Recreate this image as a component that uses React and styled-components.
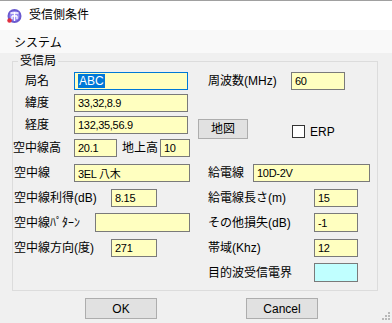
import styled, { createGlobalStyle } from "styled-components";

const GlobalStyle = createGlobalStyle`
  html, body {
    margin: 0;
    padding: 0;
    background: #f0f0f0;
  }
  body {
    font-family: "Liberation Sans", "Noto Sans CJK JP", sans-serif;
    font-size: 12px;
    color: #000;
  }
`;

const Window = styled.div`
  position: relative;
  width: 392px;
  height: 323px;
  overflow: hidden;
  background: #f0f0f0;
  display: flex;
  flex-direction: column;
`;

const TitleBar = styled.div`
  height: 29px;
  border-top: 1px solid #a0a0a0;
  background: #fff;
  display: flex;
  align-items: center;
  padding-left: 6px;
  gap: 7px;
`;

const Title = styled.span`
  font-size: 12px;
  line-height: 14px;
  margin-top: -1px;
`;

const MenuBar = styled.div`
  height: 23px;
  background: #f9f9f9;
  display: flex;
  align-items: center;
  padding-left: 14px;
  padding-top: 2px;
  box-sizing: border-box;
`;

const MenuItem = styled.span`
  line-height: 14px;
`;

const GroupBox = styled.fieldset`
  margin: 1px 0 0 12px;
  padding: 4px 0 0 0;
  width: 366px;
  height: 237px;
  box-sizing: border-box;
  border: 1px solid #dcdcdc;
  display: flex;
`;

const Legend = styled.legend`
  margin-left: 5px;
  padding: 0 2px;
  line-height: 14px;
`;

const Column = styled.div`
  width: ${(p) => p.$w}px;
  display: flex;
  flex-direction: column;
`;

const Row = styled.div`
  display: flex;
  align-items: center;
  height: ${(p) => p.$h || 18}px;
  margin-top: ${(p) => p.$mt || 0}px;
`;

const Label = styled.span`
  box-sizing: border-box;
  width: ${(p) => p.$w}px;
  padding-left: ${(p) => p.$pl || 0}px;
  margin-left: ${(p) => p.$ml || 0}px;
  line-height: 14px;
  white-space: nowrap;
`;

const Field = styled.div`
  box-sizing: border-box;
  width: ${(p) => p.$w}px;
  height: ${(p) => p.$h || 18}px;
  border: 1px solid ${(p) => (p.$focus ? "#0078d7" : "#7a7a7a")};
  background: ${(p) => (p.$cyan ? "#c0ffff" : "#ffffc0")};
  display: flex;
  align-items: center;
  padding-left: 3px;
  font-size: 11px;
  letter-spacing: -0.3px;
  white-space: nowrap;
  overflow: hidden;
`;

const Selected = styled.span`
  background: #0078d7;
  color: #fff;
  padding: 0 1px;
  font-size: 12px;
  line-height: 14px;
  letter-spacing: 0;
`;

const Button = styled.div`
  box-sizing: border-box;
  width: ${(p) => p.$w}px;
  height: ${(p) => p.$h || 21}px;
  margin-left: ${(p) => p.$ml || 0}px;
  background: #e1e1e1;
  border: 1px solid #adadad;
  display: flex;
  align-items: center;
  justify-content: center;
  line-height: 14px;
`;

const CheckBox = styled.div`
  box-sizing: border-box;
  width: 13px;
  height: 13px;
  margin-left: ${(p) => p.$ml || 0}px;
  margin-top: 5px;
  border: 1px solid #333;
  background: #fff;
`;

const CheckLabel = styled.span`
  margin-left: 5px;
  margin-top: 5px;
  line-height: 14px;
`;

const ButtonBar = styled.div`
  display: flex;
  margin-top: 7px;
  padding-left: 85px;
`;

const Grip = styled.svg`
  position: absolute;
  right: 2px;
  bottom: 3px;
`;

const AppIcon = () => (
  <svg width="16" height="16" viewBox="0 0 16 16">
    <circle cx="8.5" cy="8" r="7" fill="#6a5ad0" />
    <circle cx="8.5" cy="8" r="5" fill="#9a8ef0" />
    <path d="M4.5 5h8M8.5 4v9M6 8h5M6 8v3M11 8v3" stroke="#fff" strokeWidth="1.3" fill="none" />
    <circle cx="3.5" cy="12.5" r="2.2" fill="#e03040" />
  </svg>
);

export default function App() {
  return (
    <>
      <GlobalStyle />
      <Window>
        <TitleBar>
          <AppIcon />
          <Title>受信側条件</Title>
        </TitleBar>
        <MenuBar>
          <MenuItem>システム</MenuItem>
        </MenuBar>
        <GroupBox>
          <Legend>受信局</Legend>
          <Column $w={185}>
            <Row>
              <Label $w={61} $pl={12}>局名</Label>
              <Field $w={114} $focus>
                <Selected>ABC</Selected>
              </Field>
            </Row>
            <Row $mt={4}>
              <Label $w={61} $pl={12}>緯度</Label>
              <Field $w={114}>33,32,8.9</Field>
            </Row>
            <Row $mt={4}>
              <Label $w={61} $pl={12}>経度</Label>
              <Field $w={114}>132,35,56.9</Field>
            </Row>
            <Row $mt={5}>
              <Label $w={61}>空中線高</Label>
              <Field $w={43}>20.1</Field>
              <Label $w={38} $ml={5}>地上高</Label>
              <Field $w={30}>10</Field>
            </Row>
            <Row $mt={7}>
              <Label $w={61} $pl={1}>空中線</Label>
              <Field $w={116}>3EL 八木</Field>
            </Row>
            <Row $mt={7}>
              <Label $w={98} $pl={1}>空中線利得(dB)</Label>
              <Field $w={46}>8.15</Field>
            </Row>
            <Row $mt={6} $h={19}>
              <Label $w={82} $pl={1}>空中線ﾊﾟﾀｰﾝ</Label>
              <Field $w={95} $h={19}></Field>
            </Row>
            <Row $mt={7}>
              <Label $w={98} $pl={1}>空中線方向(度)</Label>
              <Field $w={46}>271</Field>
            </Row>
          </Column>
          <Column $w={179}>
            <Row>
              <Label $w={93} $pl={10}>周波数(MHz)</Label>
              <Field $w={54}>60</Field>
            </Row>
            <Row $mt={29} $h={20}>
              <Button $w={50} $h={20}>地図</Button>
              <CheckBox $ml={44} />
              <CheckLabel>ERP</CheckLabel>
            </Row>
            <Row $mt={25}>
              <Label $w={55} $pl={10}>給電線</Label>
              <Field $w={117}>10D-2V</Field>
            </Row>
            <Row $mt={7}>
              <Label $w={116} $pl={10}>給電線長さ(m)</Label>
              <Field $w={44}>15</Field>
            </Row>
            <Row $mt={6} $h={19}>
              <Label $w={116} $pl={10}>その他損失(dB)</Label>
              <Field $w={44} $h={19}>-1</Field>
            </Row>
            <Row $mt={7}>
              <Label $w={116} $pl={10}>帯域(Khz)</Label>
              <Field $w={44}>12</Field>
            </Row>
            <Row $mt={6} $h={19}>
              <Label $w={116} $pl={10}>目的波受信電界</Label>
              <Field $w={44} $h={19} $cyan></Field>
            </Row>
          </Column>
        </GroupBox>
        <ButtonBar>
          <Button $w={72}>OK</Button>
          <Button $w={72} $ml={89}>Cancel</Button>
        </ButtonBar>
        <Grip width="8" height="8" viewBox="0 0 8 8">
          <g fill="#b8b8b8">
            <rect x="6" y="0" width="2" height="2" />
            <rect x="3" y="3" width="2" height="2" />
            <rect x="6" y="3" width="2" height="2" />
            <rect x="0" y="6" width="2" height="2" />
            <rect x="3" y="6" width="2" height="2" />
            <rect x="6" y="6" width="2" height="2" />
          </g>
        </Grip>
      </Window>
    </>
  );
}
